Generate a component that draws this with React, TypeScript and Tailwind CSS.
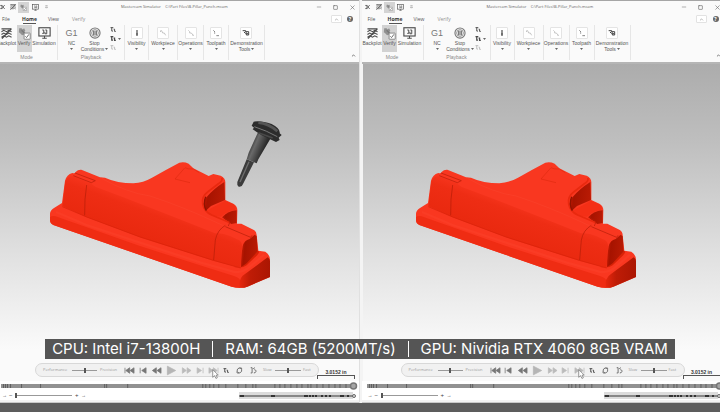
import React from "react";
import { ChevronUp, Minus, Square, X } from "lucide-react";

const ui = "font-['Liberation_Sans',Arial,sans-serif]";

/* ---------- small glyphs ---------- */

function BackplotIcon({ className = "" }: { className?: string }) {
  return (
    <svg viewBox="0 0 24 24" className={className} fill="none" stroke="#4a4a4a" strokeWidth="3" aria-hidden="true">
      <path d="M1 2h22M1 8l5-3 6 3 5-3 6 3M1 14l5-3 6 3 5-3 6 3M1 20l5-3 6 3 5-3 6 3" strokeWidth="2.4" />
      <path d="M2 23L22 2" />
    </svg>
  );
}

function VerifyIcon({ className = "" }: { className?: string }) {
  return (
    <svg viewBox="0 0 32 32" className={className} aria-hidden="true">
      <path d="M3 3h6l2 3 4-3 3 6-3 4 2 5-7 2-4-4-4-3z" fill="#919191" />
      <path d="M9 8l8 8" stroke="#777" strokeWidth="3" />
      <rect x="15" y="15" width="15" height="15" rx="1" fill="#fff" stroke="#777" strokeWidth="2" />
      <path d="M18 23l3 3 6-8" fill="none" stroke="#666" strokeWidth="2.4" />
    </svg>
  );
}

function SimulationIcon({ className = "" }: { className?: string }) {
  return (
    <svg viewBox="0 0 34 32" className={className} fill="none" stroke="#4a4a4a" strokeWidth="3" aria-hidden="true">
      <rect x="2" y="2" width="30" height="22" />
      <path d="M11 30h12M17 24v6M11 8h4v9h-4M19 8h4v10h-5v-5" strokeWidth="2.6" />
    </svg>
  );
}

function StopIcon() {
  return (
    <svg viewBox="0 0 32 32" className="size-3" fill="none" stroke="#777" aria-hidden="true">
      <circle cx="16" cy="16" r="13.5" strokeWidth="3" />
      <circle cx="16" cy="16" r="9" strokeWidth="2" />
      <path d="M13 10v12M19 10v12" stroke="#555" strokeWidth="3.4" />
    </svg>
  );
}

function StepIcon({ bold, faint }: { bold?: boolean; faint?: boolean }) {
  return (
    <svg viewBox="0 0 18 16" className="h-[5px] w-[6px]" fill="none" stroke={faint ? "#bbb" : "#4a4a4a"} strokeWidth={bold ? 4 : 3} aria-hidden="true">
      <path d="M1 2h9M5 2v11h4" />
      <path d="M11 7h3v7h4" />
    </svg>
  );
}

function AppIcon() {
  return (
    <svg viewBox="0 0 16 16" className="h-[6px] w-[5px]" fill="none" stroke="#444" strokeWidth="2.6" aria-hidden="true">
      <path d="M1 3h6l3 4 5-5M1 13h6l3-4 5 5M3 8h9" />
    </svg>
  );
}

/* ---------- ribbon ---------- */

function QuickAccess() {
  return (
    <div className="flex w-[121px] shrink-0 items-center">
      <button aria-label="Application menu" className="ml-[2px] flex h-3 w-2 items-center justify-center"><AppIcon /></button>
      <button aria-label="Backplot mode" className="ml-[2px] flex h-3 w-[10px] items-center justify-center"><BackplotIcon className="size-[6px]" /></button>
      <button aria-label="Verify mode" className="flex h-[11px] w-[11px] items-center justify-center bg-[#d4d4d4]"><VerifyIcon className="size-[7px]" /></button>
      <button aria-label="Simulation mode" className="flex h-3 w-3 items-center justify-center"><SimulationIcon className="h-[7px] w-[7px]" /></button>
      <button aria-label="Customize toolbar" className="flex h-3 w-[10px] items-center justify-center">
        <svg viewBox="0 0 8 10" className="h-1 w-[3px]" fill="none" stroke="#666" strokeWidth="1.6"><path d="M1 2h6M1 5l3 3 3-3" /></svg>
      </button>
    </div>
  );
}

function TitleBar() {
  return (
    <div className="flex h-[13px] items-center border-t border-[#a5a5a5] pr-[3px]">
      <QuickAccess />
      <h1 className="ml-1 flex-1 whitespace-pre font-['Open_Sans',sans-serif] text-[4px] leading-[6px] text-[#666]">{"Mastercam Simulator    C:\\Part Files\\B-Pillar_Punch.mcam"}</h1>
      <div className="flex items-center gap-[11px] text-[#666]">
        <button aria-label="Minimize"><Minus className="size-[6px]" /></button>
        <button aria-label="Maximize"><Square className="size-[5px]" strokeWidth={3} /></button>
        <button aria-label="Close"><X className="size-[7px]" /></button>
      </div>
    </div>
  );
}

function Tabs() {
  return (
    <div className="flex h-3 items-center pl-[6px] pr-[3px] font-['Open_Sans',sans-serif] text-[5px] leading-[8px] text-[#555]">
      <nav className="flex flex-1 gap-3">
        <button className="w-[9px] border-b border-transparent text-left">File</button>
        <button className="flex w-[13px] justify-center whitespace-nowrap border-b border-[#555] font-bold text-[#333]">Home</button>
        <button className="w-3 border-b border-transparent text-left">View</button>
        <button className="border-b border-transparent text-[#909090]">Verify</button>
      </nav>
      <button aria-label="Collapse ribbon" className="mr-[3px] flex h-2 w-[11px] items-center justify-center rounded-[1px] border border-[#e2e2e2] bg-white"><ChevronUp className="size-[5px] text-[#555]" /></button>
      <button aria-label="Help" className="flex h-2 w-[11px] items-center justify-center">
        <span className="flex size-[6px] items-center justify-center rounded-full bg-[#666] text-[5px] font-bold leading-[6px] text-white">?</span>
      </button>
    </div>
  );
}

function Caret() {
  return <svg viewBox="0 0 6 4" className="h-[2px] w-[3px] shrink-0" fill="#666" aria-hidden="true"><path d="M0 0h6L3 4z" /></svg>;
}

type ToolProps = { label: string; second?: string; icon: React.ReactNode; className?: string; caret?: boolean };

function Tool({ label, second, icon, className = "", caret }: ToolProps) {
  return (
    <button className={`flex h-[27px] flex-col items-center whitespace-nowrap text-[5px] leading-[5px] text-[#555] ${className}`}>
      <span className="flex h-4 items-center justify-center">{icon}</span>
      <span>{label}</span>
      {caret && <span className="flex h-[6px] items-center gap-[1px]">{second}<Caret /></span>}
    </button>
  );
}

function Framed({ children }: { children: React.ReactNode }) {
  return (
    <span className="flex size-3 items-center justify-center rounded-[1px] border border-[#e4e4e4] bg-white">
      <svg viewBox="0 0 24 24" className="size-2" fill="none" stroke="#aaa" strokeWidth="2" aria-hidden="true">{children}</svg>
    </span>
  );
}

function Group({ name, className, children }: { name?: string; className: string; children: React.ReactNode }) {
  return (
    <section className={`flex shrink-0 flex-col border-r border-[#e6e6e6] ${className}`}>
      <div className="flex justify-center">{children}</div>
      {name && <div className="mt-[3px] text-center text-[5px] leading-[5px] text-[#888]">{name}</div>}
    </section>
  );
}

function Ribbon() {
  return (
    <div className="flex h-[39px] border-b-2 border-[#b5b5b5] pb-[2px]">
      <Group name="Mode" className="w-[62px]">
        <Tool label="Backplot" className="w-[20px]" icon={<BackplotIcon className="size-[11px]" />} />
        <Tool label="Verify" className="w-[15px] bg-[#d2d2d2]" icon={<VerifyIcon className="size-[13px]" />} />
        <Tool label="Simulation" className="w-[25px]" icon={<SimulationIcon className="h-3 w-[13px]" />} />
      </Group>
      <Group name="Playback" className="w-[67px]">
        <Tool label="NC" className="w-[20px]" caret icon={<span className="text-[9px] leading-3 text-[#777]">G1</span>} />
        <Tool label="Stop" second="Conditions" className="w-[26px]" caret icon={<StopIcon />} />
        <div className="flex w-[13px] flex-col gap-1 pl-[2px] pt-[2px]">
          <button aria-label="Step forward"><StepIcon /></button>
          <button aria-label="Step options" className="flex items-center gap-[2px]"><StepIcon bold /><Caret /></button>
          <button aria-label="Step back" disabled><StepIcon faint /></button>
        </div>
      </Group>
      <Group className="w-[24px]">
        <Tool label="Visibility" caret icon={<Framed><path d="M12 4v4M12 10v10" stroke="#555" strokeWidth="5" /></Framed>} />
      </Group>
      <Group className="w-[29px]">
        <Tool label="Workpiece" caret icon={<Framed><path d="M4 5h4l3 7h5l4 7M3 9l3-3" /></Framed>} />
      </Group>
      <Group className="w-[26px]">
        <Tool label="Operations" caret icon={<Framed><path d="M4 4l4 4M8 8v4h5l5 6M16 19h5" /></Framed>} />
      </Group>
      <Group className="w-[25px]">
        <Tool label="Toolpath" caret icon={<Framed><path d="M4 4l5 5M8 10v4M13 20h8" stroke="#888" strokeWidth="3" /></Framed>} />
      </Group>
      <Group className="w-[36px]">
        <Tool label="Demonstration" second="Tools" caret icon={<Framed><path d="M2 5h9v5M12 8h8v10h-7v-8M6 9l5 5M16 12v4" stroke="#444" strokeWidth="3" /></Framed>} />
      </Group>
      <div className="flex flex-1 items-end justify-end pb-[2px] pr-[3px]">
        <button aria-label="Pin ribbon"><ChevronUp className="size-[5px] text-[#333]" strokeWidth={3} /></button>
      </div>
    </div>
  );
}

/* ---------- 3D scene ---------- */

function Part({ id, tool }: { id: string; tool?: boolean }) {
  const u = (n: string) => `url(#${id}-${n})`;
  return (
    <svg viewBox="0 0 750 570" className="ml-[43px] mt-[46px] h-[190px] w-[250px] shrink-0" role="img" aria-label="B-Pillar punch model">
      <defs>
        <linearGradient id={`${id}-front`} gradientUnits="userSpaceOnUse" x1="380" y1="285" x2="340" y2="395">
          <stop offset="0" stopColor="#f93720" />
          <stop offset="0.35" stopColor="#ee2d14" />
          <stop offset="1" stopColor="#e9290f" />
        </linearGradient>
        <linearGradient id={`${id}-dark`} x1="0" y1="0" x2="1" y2="0.2">
          <stop offset="0" stopColor="#d92006" />
          <stop offset="0.3" stopColor="#a61300" />
          <stop offset="1" stopColor="#b81a04" />
        </linearGradient>
        <linearGradient id={`${id}-end`} x1="0" y1="0" x2="1" y2="0">
          <stop offset="0" stopColor="#e6270e" />
          <stop offset="0.35" stopColor="#bf1c06" />
          <stop offset="1" stopColor="#ab1602" />
        </linearGradient>
        <linearGradient id={`${id}-metal`} gradientUnits="userSpaceOnUse" x1="630" y1="100" x2="672" y2="118">
          <stop offset="0" stopColor="#2c2c2c" />
          <stop offset="0.35" stopColor="#6a6a6a" />
          <stop offset="1" stopColor="#2a2a2a" />
        </linearGradient>
      </defs>
      <path d="M30 312Q30 301 42 294L66 279 75 212Q80 194 97 189 104 192 107 186 114 178 124 179L180 202 195 203Q232 220 280 220 310 218 336 203 380 178 418 158 432 154 446 161L460 175 506 198 520 192 542 197Q556 204 556 216V270L580 281Q592 288 592 300L591 341 604 341 640 359Q650 364 650 375L655 422 676 425Q690 434 690 450V501L622 530Q600 537 575 530L40 345Q30 340 30 330Z" fill="#f93720" />
      {/* front wall of the punch */}
      <path d="M76 214Q84 196 100 199L150 218 166 230 250 262 400 320 525 370Q548 368 570 378L596 390Q608 396 606 415L602 474 520 452 300 382 140 322 67 288Z" fill={u("front")} />
      {/* lower flange */}
      <path d="M30 322Q38 314 55 322L300 408 480 466 582 498Q602 504 602 516L600 534 575 530 40 345Q30 340 30 330Z" fill="#ef2c13" />
      <path d="M67 290L140 321 300 381 520 451 602 474" fill="none" stroke="#d82109" strokeWidth="2" />
      <path d="M602 473L653 422Q663 425 650 437L620 466Q605 477 580 470Z" fill="#d92207" />
      {/* shaded end faces */}
      <path d="M600 533Q594 505 615 492L683 442Q690 446 690 454V501L622 530Q610 535 600 533Z" fill={u("end")} />
      <path d="M603 472Q603 440 608 409 612 391 629 387L644 374 650 379 653 424 620 460Z" fill={u("dark")} />
      <path d="M497 303Q484 283 498 263 520 237 553 216L555 270 513 288Z" fill={u("dark")} />
      <path d="M546 322Q565 302 590 301L590 339 574 342Z" fill={u("dark")} />
      {/* fillets and seams */}
      <path d="M498 303L555 272 580 283Q590 290 586 299 560 303 543 320L510 315Q500 310 498 303Z" fill="#f42f16" />
      <path d="M545 204Q550 212 534 222L503 246Q484 260 488 282 492 304 515 315L570 338" fill="none" stroke="#e9290f" strokeWidth="5" />
      <path d="M497 260Q488 282 499 302" fill="none" stroke="#8e1200" strokeWidth="4" />
      <path d="M105 189L166 212 154 218 100 197M140 225Q133 265 134 316M556 346Q532 360 526 390L521 450M556 350L632 382 636 376M550 322L570 335 565 348" fill="none" stroke="#b31d08" strokeWidth="2" />
      <path d="M435 173Q442 178 460 177L478 188M405 207L434 174M405 207L450 218" fill="none" stroke="#df2a11" strokeWidth="2" />
      <path d="M185 205Q260 248 330 258 430 290 550 347" fill="none" stroke="#fa3e27" strokeWidth="3" />
      <path d="M48 306L140 345 300 398 480 457 585 486Q610 488 630 470L672 434" fill="none" stroke="#fa3c25" strokeWidth="7" />
      {tool && (
        <g>
          <path d="M620 148L642 157 609 222Q606 232 596 230 590 225 592 216Z" fill="#3c3c3c" />
          <path d="M627 155L600 216" stroke="#6e6e6e" strokeWidth="4" />
          <path d="M656 62L696 78 655 148 650 160 620 148 626 128Z" fill={u("metal")} />
          <path d="M641 35Q660 30 695 42 722 56 719 70L725 75 716 83 719 90 708 96 665 76 638 58 642 53 635 47Z" fill="#2c2c2c" />
          <path d="M655 38Q685 40 712 64" fill="none" stroke="#555" strokeWidth="8" />
          <path d="M643 50Q680 62 712 80" fill="none" stroke="#777" strokeWidth="3" />
          <path d="M655 68L698 84" stroke="#484848" strokeWidth="5" />
        </g>
      )}
    </svg>
  );
}

/* ---------- playback ---------- */

function Range({ label, value, className }: { label: string; value: number; className: string }) {
  return (
    <input
      type="range"
      aria-label={label}
      defaultValue={value}
      className={`h-[7px] appearance-none bg-[linear-gradient(#999,#999)] bg-[length:100%_1px] bg-center bg-no-repeat [&::-webkit-slider-thumb]:h-[5px] [&::-webkit-slider-thumb]:w-[2px] [&::-webkit-slider-thumb]:appearance-none [&::-webkit-slider-thumb]:bg-[#555] ${className}`}
    />
  );
}

const transport: { name: string; d: string; color: string; wide: string }[] = [
  { name: "Go to start", d: "M2 3v14M14 3v14L4 10zM25 3v14L15 10z", color: "#777", wide: "w-[11px]" },
  { name: "Previous", d: "M5 3v14M20 3v14L9 10z", color: "#777", wide: "w-[8px]" },
  { name: "Rewind", d: "M13 3v14L3 10zM25 3v14L15 10z", color: "#777", wide: "w-[11px]" },
  { name: "Play", d: "M3-1v22L24 10z", color: "#b5b5b5", wide: "w-[11px]" },
  { name: "Fast forward", d: "M3 3v14l10-7zM15 3v14l10-7z", color: "#bbb", wide: "w-[11px]" },
  { name: "Next", d: "M5 3v14l11-7zM20 3v14", color: "#bbb", wide: "w-[8px]" },
  { name: "Go to end", d: "M2 3v14l10-7zM13 3v14l10-7zM25 3v14", color: "#bbb", wide: "w-[11px]" },
];

function Cursor() {
  return (
    <svg viewBox="0 0 12 18" className="absolute left-1 top-[5px] h-[10px] w-[7px]" aria-hidden="true">
      <path d="M1 1v14l3.400-3 2.400 5 2.500-1.200-2.300-4.800H11z" fill="#fff" stroke="#666" strokeWidth="1.200" />
    </svg>
  );
}

function PlayerBar() {
  return (
    <div className="ml-[39px] flex h-[14px] w-[284px] shrink-0 items-center rounded-full border border-[#d8d8d8] bg-[#f1f1f1] pl-[7px] font-['Open_Sans',sans-serif] text-[4px] leading-[6px] text-[#999]">
      <span className="w-[29px]">Performance</span>
      <Range label="Performance or precision" value={50} className="w-[25px]" />
      <span className="ml-[3px] w-[24px]">Precision</span>
      <div className="flex items-center gap-[4px]">
        {transport.map((t) => (
          <button key={t.name} aria-label={t.name} className={`relative flex h-3 items-center justify-center ${t.wide}`}>
            <svg viewBox="0 -4 27 28" className="h-[11px] w-[11px] shrink-0" fill={t.color} stroke={t.color} strokeWidth="2"><path d={t.d} /></svg>
            {t.name === "Go to end" && <Cursor />}
          </button>
        ))}
      </div>
      <div className="ml-[4px] flex flex-1 items-center gap-[7px]">
        <button aria-label="Step mode"><StepIcon /></button>
        <button aria-label="Loop">
          <svg viewBox="0 0 20 20" className="size-[7px]" fill="none" stroke="#666" strokeWidth="2.600"><path d="M4 13A7 7 0 0 1 14 4M10 3h6v5M16 8A7 7 0 0 1 6 16M9 17H3v-5" /></svg>
        </button>
        <button aria-label="Jump">
          <svg viewBox="0 0 20 20" className="size-[7px]" fill="none" stroke="#666" strokeWidth="2.600"><path d="M2 2h4v15H2M9 5l5-3M11 17c9 0 7-11 1-9" /></svg>
        </button>
      </div>
      <span className="w-3">Slow</span>
      <Range label="Speed" value={50} className="w-[26px]" />
      <span className="ml-[2px] w-[15px]">Fast</span>
    </div>
  );
}

const marks = [2, 4, 6, 9, 20, 39, 103, 105, 126, 201, 204, 208, 212, 217, 224, 236, 244, 251, 254, 273, 278, 283, 289, 295, 300, 306, 309, 315, 321, 327, 333, 338, 344];
const lowMarks = [1, 3, 32, 34, 65, 67, 70, 73, 76, 82, 86, 90, 101, 103, 108];

function Timeline() {
  return (
    <div className="bg-white">
      <div className="flex h-[9px] items-center pl-[5px] pr-[1px]">
        <svg viewBox="0 0 356 9" preserveAspectRatio="none" className="h-[9px] w-full" role="img" aria-label="Operation timeline">
          <rect y="3" width="350" height="4" fill="#919191" />
          {marks.map((m) => <rect key={m} x={m} y="3" width="1" height="4" fill="#606060" />)}
          <circle cx="352" cy="5" r="3" fill="#a5a5a5" stroke="#777" strokeWidth="1.500" />
        </svg>
      </div>
      <div className="flex h-[10px] items-center pl-[6px] pr-[3px] text-[6px] leading-[6px] text-[#444]">
        <span className="w-[7px] text-[5px]">→</span>
        <button aria-label="Zoom out" className="w-[6px] text-left">−</button>
        <Range label="Timeline zoom" value={0} className="w-[57px]" />
        <button aria-label="Zoom in" className="ml-[3px] w-[6px] text-left">+</button>
        <span className="text-[5px]">→</span>
        <svg viewBox="0 0 117 9" className="ml-auto h-[9px] w-[117px]" role="img" aria-label="Toolpath detail">
          <rect width="114" height="7" y="1" fill="#dcdcdc" />
          <rect y="4" width="114" height="2" fill="#888" />
          {lowMarks.map((m) => <rect key={m} x={m} y="4" width="2" height="2" fill="#333" />)}
          <circle cx="115" cy="5" r="1.500" fill="#ddd" stroke="#666" />
        </svg>
      </div>
      <div className="h-[3px] border-b border-[#c8c8c8] bg-[#f2f2f2]" />
    </div>
  );
}

function Simulator({ id, tool, className }: { id: string; tool?: boolean; className: string }) {
  return (
    <main className={`flex flex-col bg-[#fafafa] ${className}`}>
      <TitleBar />
      <Tabs />
      <Ribbon />
      <div className="flex flex-1 flex-col border-l border-[#f4f4f4] bg-[linear-gradient(#acacac,#bfbfbf_25%,#e2e2e2_62%,#fafafa_90%)]">
        <Part id={id} tool={tool} />
        <div className="-ml-px mt-auto flex items-start pt-10">
          <PlayerBar />
          <div className="-ml-[2px] mt-[6px] w-[38px] shrink-0 text-center text-[5px] font-bold leading-[6px] text-[#333]">
            3.0152 in
            <div className="h-[4px] border-x border-t border-[#555]" />
          </div>
        </div>
        <div className="h-[2px]" />
      </div>
      <Timeline />
    </main>
  );
}

export default function App() {
  return (
    <div className={`relative flex min-h-screen flex-col overflow-hidden bg-[#f4f4f4] ${ui}`}>
      <div className="flex flex-1 gap-[2px]">
        <div className="flex min-w-0 flex-1 overflow-hidden border-r border-[#e0e0e0]">
          <Simulator id="left" tool className="-ml-1 flex-1" />
        </div>
        <div className="flex min-w-0 flex-1 overflow-hidden">
          <Simulator id="right" className="-mr-1 flex-1" />
        </div>
      </div>
      <div className="h-[9px] bg-[#5c5c5c]" />
      <div className="absolute inset-x-0 bottom-[53px] flex justify-center">
        <div className="flex h-[20px] items-center gap-3 whitespace-nowrap bg-[#555] px-[7px] font-['Inter',sans-serif] text-[15px] leading-[20px] text-white">
          <span>CPU: Intel i7-13800H</span>
          <span className="h-4 w-px bg-white" />
          <span>RAM: 64GB (5200MT/s)</span>
          <span className="h-4 w-px bg-white" />
          <span>GPU: Nividia RTX 4060 8GB VRAM</span>
        </div>
      </div>
    </div>
  );
}
